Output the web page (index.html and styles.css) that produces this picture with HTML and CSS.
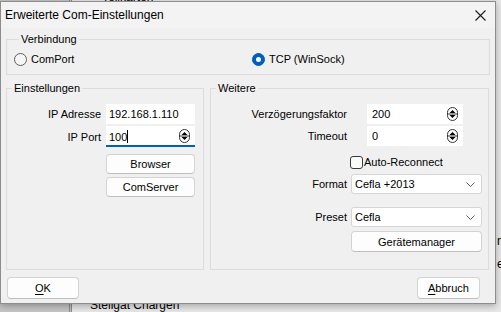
FILE: index.html
```html
<!DOCTYPE html>
<html lang="de">
<head>
  <meta charset="UTF-8">
  <title>Erweiterte Com-Einstellungen</title>
  <link rel="stylesheet" href="styles.css">
</head>
<body>

<div class="desktop">

  <!-- Main app window behind the dialog -->
  <div class="app">
    <div class="app-side"></div>
    <div class="app-main">
      <div class="app-top">Teilkarten</div>
      <div class="app-line">Steligat Chargen</div>
    </div>
    <div class="app-edge">
      <div>n-</div>
      <div>e</div>
    </div>
  </div>

  <!-- Dialog -->
  <div class="dialog">
    <div class="titlebar">
      <span>Erweiterte Com-Einstellungen</span>
      <svg class="close" width="11" height="11" viewBox="0 0 11 11">
        <path d="M0.5 0.5 L10.5 10.5 M10.5 0.5 L0.5 10.5" stroke="#1a1a1a" stroke-width="1.1" fill="none"/>
      </svg>
    </div>

    <div class="dlg-body">

      <fieldset class="group group-conn">
        <legend>Verbindung</legend>
        <div class="radio radio-com"><span class="radio-dot"></span>ComPort</div>
        <div class="radio checked"><span class="radio-dot"></span>TCP (WinSock)</div>
      </fieldset>

      <div class="groups">

        <fieldset class="group group-left">
          <legend>Einstellungen</legend>
          <div class="row">
            <span class="lbl">IP Adresse</span>
            <div class="edit">192.168.1.110</div>
          </div>
          <div class="row row-2">
            <span class="lbl">IP Port</span>
            <div class="edit focus">
              <span>100<span class="caret"></span></span>
              <svg class="spin" width="11" height="14" viewBox="0 0 11 14">
                <rect x="0.5" y="0.5" width="10" height="13" rx="5" fill="#fff" stroke="#333"/>
                <path d="M2.5 6 L5.5 3 L8.5 6 Z M2.5 8 L5.5 11 L8.5 8 Z" fill="#000"/>
                <path d="M1 7 H10" stroke="#333"/>
              </svg>
            </div>
          </div>
          <div class="btn btn-browser">Browser</div>
          <div class="btn btn-comserver">ComServer</div>
        </fieldset>

        <fieldset class="group group-right">
          <legend>Weitere</legend>
          <div class="row">
            <span class="lbl">Verzögerungsfaktor</span>
            <div class="edit spin-edit">
              <span>200</span>
              <svg class="spin" width="11" height="14" viewBox="0 0 11 14">
                <rect x="0.5" y="0.5" width="10" height="13" rx="5" fill="#fff" stroke="#333"/>
                <path d="M2.5 6 L5.5 3 L8.5 6 Z M2.5 8 L5.5 11 L8.5 8 Z" fill="#000"/>
                <path d="M1 7 H10" stroke="#333"/>
              </svg>
            </div>
          </div>
          <div class="row row-2">
            <span class="lbl">Timeout</span>
            <div class="edit spin-edit">
              <span>0</span>
              <svg class="spin" width="11" height="14" viewBox="0 0 11 14">
                <rect x="0.5" y="0.5" width="10" height="13" rx="5" fill="#fff" stroke="#333"/>
                <path d="M2.5 6 L5.5 3 L8.5 6 Z M2.5 8 L5.5 11 L8.5 8 Z" fill="#000"/>
                <path d="M1 7 H10" stroke="#333"/>
              </svg>
            </div>
          </div>
          <div class="check-row"><span class="check-box"></span>Auto-Reconnect</div>
          <div class="row row-format">
            <span class="lbl">Format</span>
            <div class="combo">
              <span>Cefla +2013</span>
              <svg width="9" height="5" viewBox="0 0 9 5"><path d="M0.5 0.5 L4.5 4.5 L8.5 0.5" stroke="#606060" fill="none"/></svg>
            </div>
          </div>
          <div class="row row-preset">
            <span class="lbl">Preset</span>
            <div class="combo">
              <span>Cefla</span>
              <svg width="9" height="5" viewBox="0 0 9 5"><path d="M0.5 0.5 L4.5 4.5 L8.5 0.5" stroke="#606060" fill="none"/></svg>
            </div>
          </div>
          <div class="btn btn-manager">Gerätemanager</div>
        </fieldset>

      </div>

      <div class="footer">
        <div class="btn btn-ok"><u>O</u>K</div>
        <div class="btn btn-cancel"><u>A</u>bbruch</div>
      </div>

    </div>
  </div>

</div>

</body>
</html>
```

FILE: styles.css
```css
* { box-sizing: border-box; margin: 0; padding: 0; }
body { font-family: 'Liberation Sans', Arial, sans-serif; font-size: 11px; color: #000; background: #d9d9d9; }
.desktop { position: relative; width: 501px; height: 312px; overflow: hidden; }

/* app window behind */
.app { display: flex; height: 312px; background: #e8e8e8; }
.app-side { width: 72px; background: #c6c6c6; border-right: 3px double #8a8a8a; }
.app-main { flex: 1; padding-left: 18px; display: flex; flex-direction: column; justify-content: space-between; font-size: 12px; line-height: 14px; }
.app-top { margin-top: -10px; padding-left: 12px; }
.app-edge { width: 5px; padding: 230px 0 0 1px; white-space: nowrap; font-size: 12px; line-height: 23px; }

/* dialog window */
.dialog {
  position: absolute; left: 0; top: 1px; width: 496px; height: 303px;
  background: #f0f0f0; border: 1px solid #8d8d8d;
  box-shadow: 0 2px 7px rgba(0, 0, 0, 0.3);
  display: flex; flex-direction: column;
}
.titlebar {
  height: 26px; background: #f3f3f3; font-size: 12px;
  display: flex; align-items: center; justify-content: space-between;
  padding: 0 9px 0 4px;
}
.dlg-body { flex: 1; padding: 4px 0 0 5px; }

.group { border: 1px solid #dcdcdc; }
.group legend { margin-left: 5px; padding: 0 2px; line-height: 14px; }

.group-conn { width: 484px; height: 43px; display: flex; align-items: center; padding: 0 0 2px 7px; }
.radio { display: flex; align-items: center; gap: 4px; }
.radio-com { width: 238px; }
.radio-dot { width: 13px; height: 13px; border-radius: 50%; border: 1px solid #606060; background: #f6f6f6; }
.checked .radio-dot {
  background: #005fb8; border-color: #005fb8;
  display: flex; align-items: center; justify-content: center;
}
.checked .radio-dot::after { content: ''; width: 5px; height: 5px; border-radius: 50%; background: #fff; }

.groups { display: flex; gap: 6px; margin-top: 6px; }
.group-left { width: 198px; height: 189px; padding-top: 9px; }
.group-right { width: 279px; height: 189px; padding-top: 9px; }

.row { display: flex; align-items: center; }
.row-2 { margin-top: 2px; }
.lbl { text-align: right; white-space: nowrap; }
.group-left .lbl { width: 94px; margin-right: 5px; }
.group-right .lbl { width: 136px; }

.edit {
  height: 20px; background: #fff; padding: 0 5px 0 3px;
  display: flex; align-items: center; justify-content: space-between;
}
.group-left .edit { width: 89px; }
.edit.focus { height: 21px; border-bottom: 2px solid #005fb8; padding-top: 1px; }
.caret { display: inline-block; width: 1px; height: 13px; background: #000; vertical-align: -2px; }
.spin-edit { width: 96px; margin-left: 20px; padding-left: 5px; }

.btn {
  height: 20px; background: #fdfdfd;
  border: 1px solid #d3d3d3; border-bottom-color: #bfbfbf; border-radius: 4px;
  display: flex; align-items: center; justify-content: center;
}
.btn-browser, .btn-comserver { width: 89px; margin-left: 99px; }
.btn-browser { margin-top: 7px; }
.btn-comserver { margin-top: 3px; }

.check-row { display: flex; align-items: center; gap: 1px; height: 14px; margin: 9px 0 0 139px; }
.check-box { width: 13px; height: 13px; border: 1px solid #3a3a3a; border-radius: 3px; background: #fafafa; }

.combo {
  width: 131px; height: 20px; margin-left: 4px; background: #fff;
  border: 1px solid #d5d5d5; border-radius: 3px; padding: 0 6px 0 3px;
  display: flex; align-items: center; justify-content: space-between;
}
.row-format { margin-top: 5px; }
.row-preset { margin-top: 13px; }
.btn-manager { width: 131px; height: 21px; margin: 4px 0 0 140px; }

.footer { display: flex; justify-content: space-between; margin-top: 7px; padding: 0 15px 0 1px; }
.btn-ok { width: 72px; height: 22px; }
.btn-cancel { width: 63px; height: 22px; }
.btn u { text-underline-offset: 2px; }
```
